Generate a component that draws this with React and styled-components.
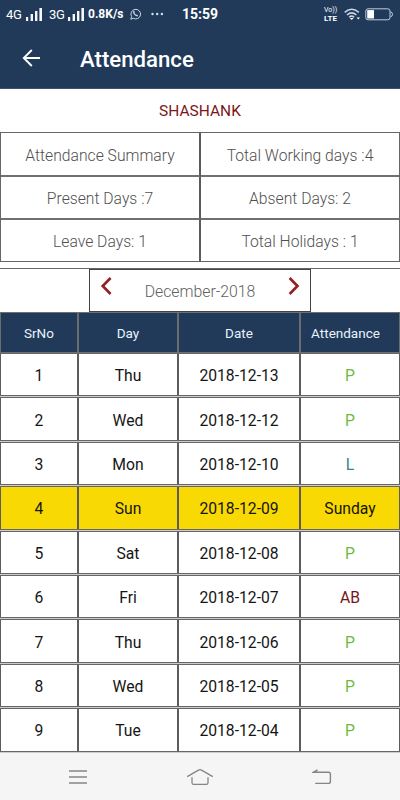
import React from "react";
import styled, { createGlobalStyle } from "styled-components";

const summary = [
  "Attendance Summary",
  "Total Working days :4",
  "Present Days :7",
  "Absent Days: 2",
  "Leave Days: 1",
  "Total Holidays : 1",
];

const records = [
  { day: "Thu", date: "2018-12-13", status: "P" },
  { day: "Wed", date: "2018-12-12", status: "P" },
  { day: "Mon", date: "2018-12-10", status: "L" },
  { day: "Sun", date: "2018-12-09", status: "Sunday" },
  { day: "Sat", date: "2018-12-08", status: "P" },
  { day: "Fri", date: "2018-12-07", status: "AB" },
  { day: "Thu", date: "2018-12-06", status: "P" },
  { day: "Wed", date: "2018-12-05", status: "P" },
  { day: "Tue", date: "2018-12-04", status: "P" },
];

const statusColors = {
  P: "#6cbb3c",
  L: "#2f8290",
  AB: "#741414",
  Sunday: "#151500",
};

function Signal() {
  return (
    <svg width='17' height='13' viewBox='0 0 17 13' fill='#f4f8fc'>
      <rect x='0' y='9' width='2.2' height='4' />
      <rect x='4.6' y='6' width='2.4' height='7' />
      <rect x='9' y='3' width='2.4' height='10' />
      <rect x='13.4' y='0' width='2.6' height='13' />
    </svg>
  );
}

function StatusBar() {
  return (
    <Status>
      <Network>4G</Network>
      <Signal />
      <Network $second>3G</Network>
      <Signal />
      <Speed>0.8K/s</Speed>
      <svg width='11' height='12' viewBox='0 0 11 12' fill='none' stroke='#c9d6e4'>
        <path d='M.8 11.2l.8-2.7A4.8 4.8 0 1 1 3.4 10.3z' />
        <path d='M3.7 3.2c-.4 2.3 1.7 4.6 4 4.6M3.7 3.4l.8 1.2M6.4 7l1.3.6' strokeWidth='1.3' />
      </svg>
      <Dots width='13' height='4' viewBox='0 0 13 4' fill='#d5dfe9'>
        <circle cx='1.5' cy='2' r='1.2' />
        <circle cx='6.2' cy='2' r='1.2' />
        <circle cx='10.9' cy='2' r='1.2' />
      </Dots>
      <Clock>15:59</Clock>
      <Volte>
        <span>Vo))</span>
        <b>LTE</b>
      </Volte>
      <svg width='17' height='13' viewBox='0 0 17 13' fill='none' stroke='#c7d4e2' strokeWidth='1.5'>
        <path d='M.7 4.4Q7.7-1.8 14.8 4.4M3 7Q7.7 2.7 12.4 7M5.2 9.3Q7.7 7 10.2 9.3' />
        <path d='M5.8 10L7.7 12L9.6 10Z' fill='#fff' stroke='none' />
        <path d='M12.6 9.4h3.4l-1.7 2z' fill='#fff' stroke='none' />
      </svg>
      <Battery width='28' height='13' viewBox='0 0 28 13' fill='none'>
        <rect x='.8' y='.8' width='24.2' height='11' rx='2.2' stroke='#bdcddd' />
        <path d='M25.5 4q2 0 2 2.3t-2 2.3' stroke='#bdcddd' />
        <rect x='2.2' y='2.1' width='6.8' height='8.4' fill='#fff' />
      </Battery>
    </Status>
  );
}

function App() {
  return (
    <Screen>
      <GlobalStyle />
      <Header>
        <StatusBar />
        <TitleBar>
          <svg width='19' height='18' viewBox='0 0 19 18' fill='none' stroke='#fff' strokeWidth='1.9'>
            <path d='M18 9H2M9.8 1L1.8 9l8 8' />
          </svg>
          <Title>Attendance</Title>
        </TitleBar>
      </Header>
      <StudentName>SHASHANK</StudentName>
      <Summary>
        {summary.map((text) => (
          <SummaryCell key={text}>{text}</SummaryCell>
        ))}
      </Summary>
      <MonthSection>
        <MonthPicker>
          <ArrowButton>
            <svg width='12' height='18' viewBox='0 0 12 18' fill='none' stroke='#932021' strokeWidth='2.6'>
              <path d='M10.6 1L2.7 9l7.9 8' />
            </svg>
          </ArrowButton>
          <Month>December-2018</Month>
          <ArrowButton>
            <svg width='12' height='18' viewBox='0 0 12 18' fill='none' stroke='#932021' strokeWidth='2.6'>
              <path d='M1.6 1l7.9 8-7.9 8' />
            </svg>
          </ArrowButton>
        </MonthPicker>
      </MonthSection>
      <TableHead>
        <HeadCell>SrNo</HeadCell>
        <HeadCell>Day</HeadCell>
        <HeadCell>Date</HeadCell>
        <HeadCell>Attendance</HeadCell>
      </TableHead>
      <TableBody>
        {records.map((record, index) => (
          <Row key={record.date} $highlight={record.status === "Sunday"}>
            <Cell>{index + 1}</Cell>
            <Cell>{record.day}</Cell>
            <Cell>{record.date}</Cell>
            <Cell $color={statusColors[record.status]}>{record.status}</Cell>
          </Row>
        ))}
      </TableBody>
      <NavBar>
        <svg width='20' height='16' viewBox='0 0 20 16' stroke='#858585' strokeWidth='1.4'>
          <path d='M1 2h18M1 8h18M1 14h18' />
        </svg>
        <svg width='28' height='18' viewBox='0 0 28 18' fill='none' stroke='#858585' strokeWidth='1.3'>
          <path d='M1.2 8.6L12.5 2.1q1.5-.8 3 0L26.8 8.6M6 9.2v5.6q0 1.6 1.6 1.6h12.8q1.6 0 1.6-1.6V9.2' />
        </svg>
        <svg width='20' height='16' viewBox='0 0 20 16' fill='none' stroke='#858585' strokeWidth='1.4'>
          <path d='M5.6 .8L1.6 3.2H16.4Q18.4 3.2 18.4 5.2V12.4Q18.4 14.4 16.4 14.4H3.2' />
        </svg>
      </NavBar>
    </Screen>
  );
}

export default App;

const GlobalStyle = createGlobalStyle`
  * {
    box-sizing: border-box;
  }
  body {
    margin: 0;
    font-family: Roboto, sans-serif;
  }
  svg {
    display: block;
    flex: none;
  }
`;

const Screen = styled.div`
  width: 400px;
  height: 800px;
  display: flex;
  flex-direction: column;
  background: #fff;
  overflow: hidden;
`;

const Header = styled.header`
  height: 89px;
  flex: none;
  background: #213a5a;
  border-bottom: 1px solid #435366;
  color: #fff;
`;

const Status = styled.div`
  height: 28px;
  display: flex;
  align-items: center;
  padding: 0 7px 0 6px;
  white-space: nowrap;
`;

const Network = styled.span`
  width: ${(props) => (props.$second ? "19px" : "20px")};
  margin-left: ${(props) => (props.$second ? "6px" : "0")};
  padding-top: 2px;
  font-size: 13px;
  letter-spacing: -0.3px;
  line-height: 14px;
`;

const Speed = styled.span`
  width: 42px;
  margin-left: 3px;
  font-size: 12px;
  font-weight: 700;
`;

const Dots = styled.svg`
  margin-left: 10px;
`;

const Clock = styled.span`
  width: 36px;
  margin-left: 18px;
  font-size: 14px;
  font-weight: 700;
`;

const Volte = styled.div`
  display: flex;
  flex-direction: column;
  width: 15px;
  margin: 0 5px 0 auto;
  font-size: 7px;
  line-height: 8px;
  b {
    font-size: 8px;
    line-height: 9px;
    font-weight: 700;
  }
`;

const Battery = styled.svg`
  margin-left: 4px;
`;

const TitleBar = styled.div`
  height: 60px;
  display: flex;
  align-items: center;
  padding-left: 22px;
`;

const Title = styled.h1`
  margin: 1px 0 0 39px;
  font-size: 22.2px;
  font-weight: 500;
`;

const StudentName = styled.div`
  height: 43px;
  flex: none;
  padding-top: 1px;
  line-height: 43px;
  text-align: center;
  color: #7c1719;
  font-size: 15.5px;
`;

const Summary = styled.div`
  display: grid;
  grid-template-columns: 200px 198px;
  grid-template-rows: 44px 43px 41px;
  border: 1px solid #666;
  flex: none;
`;

const SummaryCell = styled.div`
  display: flex;
  align-items: center;
  justify-content: center;
  padding-top: 2px;
  color: #505050;
  font-size: 15.7px;
  font-weight: 300;
  &:nth-child(odd) {
    border-right: 2px solid #5b5b5b;
  }
  &:nth-child(-n + 4) {
    border-bottom: 2px solid #707070;
  }
`;

const MonthSection = styled.div`
  height: 44px;
  flex: none;
  display: flex;
  justify-content: center;
  margin-top: 6px;
  border-top: 1px solid #666;
`;

const MonthPicker = styled.div`
  width: 222px;
  display: flex;
  justify-content: space-between;
  padding: 0 10px;
  border: 1px solid #444;
`;

const ArrowButton = styled.button`
  align-self: flex-start;
  margin-top: 7px;
  padding: 0;
  border: none;
  background: none;
`;

const Month = styled.span`
  line-height: 44px;
  color: #606060;
  font-size: 15.8px;
  font-weight: 300;
`;

const TableHead = styled.div`
  height: 41px;
  flex: none;
  display: grid;
  grid-template-columns: 79px 100px 122px 99px;
  background: #213a5a;
  border: 1px solid #707070;
  border-width: 1px 0;
`;

const HeadCell = styled.div`
  display: flex;
  align-items: center;
  justify-content: center;
  padding-top: 1px;
  color: #e9f2fa;
  font-size: 13.5px;
  border-right: 2px solid #696d70;
  &:first-child {
    border-left: 1px solid #696d70;
  }
  &:last-child {
    padding-right: 9px;
    border-right-width: 1px;
  }
`;

const TableBody = styled.div`
  display: grid;
  grid-auto-rows: 43.4px;
  gap: 1px;
  padding-bottom: 1px;
  flex: none;
  background: #ccc;
`;

const Row = styled.div`
  display: grid;
  grid-template-columns: 79px 100px 122px 99px;
  border: 1px solid #666;
  border-width: 1px 0;
  background: ${(props) => (props.$highlight ? "#f9d903" : "#fff")};
`;

const Cell = styled.div`
  display: flex;
  align-items: center;
  justify-content: center;
  padding-top: 2px;
  color: ${(props) => props.$color || "#151515"};
  font-size: 15.7px;
  border-right: 2px solid #5c5c5c;
  &:first-child {
    border-left: 1px solid #5c5c5c;
  }
  &:last-child {
    border-right-width: 1px;
  }
`;

const NavBar = styled.nav`
  flex: 1;
  display: flex;
  align-items: center;
  justify-content: space-between;
  padding: 2px 68px 0 68px;
  background: #f5f5f5;
`;
